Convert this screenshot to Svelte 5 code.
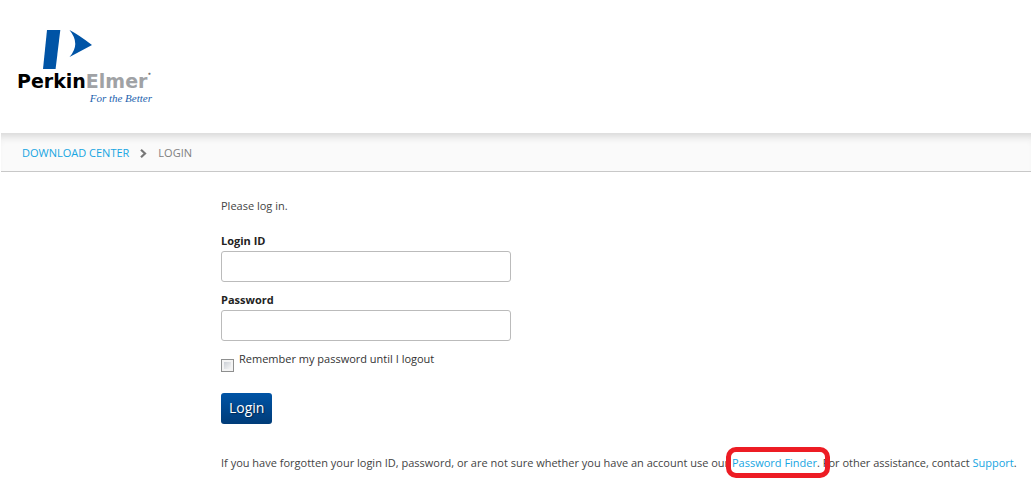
<script>
    let loginId = '';
    let password = '';
    let remember = false;
</script>

<svelte:head>
    <title>Login</title>
</svelte:head>

<div class="page">
    <header>
        <div class="logo">
            <svg class="mark" width="50" height="40" viewBox="0 0 50 40" aria-hidden="true">
                <path d="M4 0H17.3L12.6 39H0Z" fill="#0054a6" />
                <path d="M26.5 0Q36 5 49 15Q36 22 26.5 27Q38 14 26.5 0Z" fill="#0054a6" />
            </svg>
            <div class="brand">Perkin<span>Elmer</span><sup>•</sup></div>
            <div class="tagline">For the Better</div>
        </div>
    </header>

    <nav aria-label="Breadcrumb">
        <a href="#download">DOWNLOAD CENTER</a>
        <svg width="7" height="9" viewBox="0 0 7 9" aria-hidden="true">
            <path d="M1 0.8L5 4.5L1 8.2" fill="none" stroke="#777" stroke-width="2.2" />
        </svg>
        <span>LOGIN</span>
    </nav>

    <main>
        <p>Please log in.</p>
        <form on:submit|preventDefault>
            <div class="field">
                <label for="loginId">Login ID</label>
                <input type="text" id="loginId" bind:value={loginId} />
            </div>
            <div class="field">
                <label for="password">Password</label>
                <input type="password" id="password" bind:value={password} />
            </div>
            <div class="remember">
                <input type="checkbox" id="remember" bind:checked={remember} />
                <label for="remember">Remember my password until I logout</label>
            </div>
            <button type="submit">Login</button>
        </form>
        <p class="help">
            If you have forgotten your login ID, password, or are not sure whether you have an account use our
            <span class="finder"><a href="#finder">Password Finder</a></span>. For other assistance, contact
            <a href="#support">Support</a>.
        </p>
    </main>
</div>

<style>
    :global(body) {
        background: #fff;
    }

    .page {
        padding-left: 1px;
        color: #444;
        font-family: 'Open Sans', 'Noto Sans', sans-serif;
        font-size: 11px;
        line-height: 16px;
    }

    header {
        padding: 30px 16px 28px;
    }

    .logo {
        width: 140px;
    }

    .mark {
        display: block;
        margin-left: 26px;
    }

    .brand {
        display: flex;
        color: #000;
        font: bold 19px/22px 'DejaVu Sans', sans-serif;
    }

    .brand span {
        color: #a0a2a5;
    }

    .brand sup {
        color: #777;
        font-size: 6px;
        line-height: 8px;
    }

    .tagline {
        padding-right: 5px;
        color: #1b5fae;
        font: italic 11px/13px 'Liberation Serif', serif;
        text-align: right;
    }

    a {
        color: #16a5e2;
        text-decoration: none;
    }

    nav {
        display: flex;
        align-items: center;
        gap: 11px;
        padding: 12px 21px 10px;
        border-bottom: 1px solid #c8c8c8;
        background: #fafafa;
        box-shadow: inset 0 9px 8px -6px #d4d4d4;
        color: #808080;
    }

    main {
        padding: 26px 0 19px 220px;
    }

    p {
        margin: 0;
    }

    form {
        margin: 19px 0 31px;
    }

    .field {
        display: flex;
        flex-direction: column;
        width: 290px;
        margin-bottom: 10px;
    }

    .field label {
        height: 18px;
        color: #222;
        font-weight: bold;
    }

    .field input {
        box-sizing: border-box;
        height: 31px;
        padding: 4px 8px;
        border: 1px solid #bbb;
        border-radius: 3px;
        background: #fff;
        font: inherit;
    }

    .remember {
        display: flex;
        align-items: flex-end;
        gap: 5px;
        height: 21px;
        color: #333;
    }

    .remember label {
        height: 21px;
    }

    .remember input {
        appearance: none;
        box-sizing: border-box;
        width: 13px;
        height: 13px;
        margin: 0;
        border: 1px solid #8e8f8f;
        background: linear-gradient(135deg, #cbcfd5, #f6f6f6) content-box, #f4f4f4;
        padding: 2px;
    }

    .remember input:checked {
        background: #0054a6 content-box;
    }

    button {
        height: 31px;
        margin-top: 21px;
        padding: 0 8px 2px;
        border: 0;
        border-radius: 3px;
        background: linear-gradient(#0054a6, #003c78);
        color: #fff;
        font: 14px/20px 'Open Sans', 'Noto Sans', sans-serif;
        text-shadow: 1px 1px 1px #002850;
        cursor: pointer;
    }

    .help {
        white-space: nowrap;
    }

    .finder {
        position: relative;
    }

    /* red ring round the link */
    .finder::after {
        content: '';
        position: absolute;
        inset: -8px -13px -8px -6px;
        border: 5px solid #ed1c24;
        border-radius: 10px;
        pointer-events: none;
    }
</style>
